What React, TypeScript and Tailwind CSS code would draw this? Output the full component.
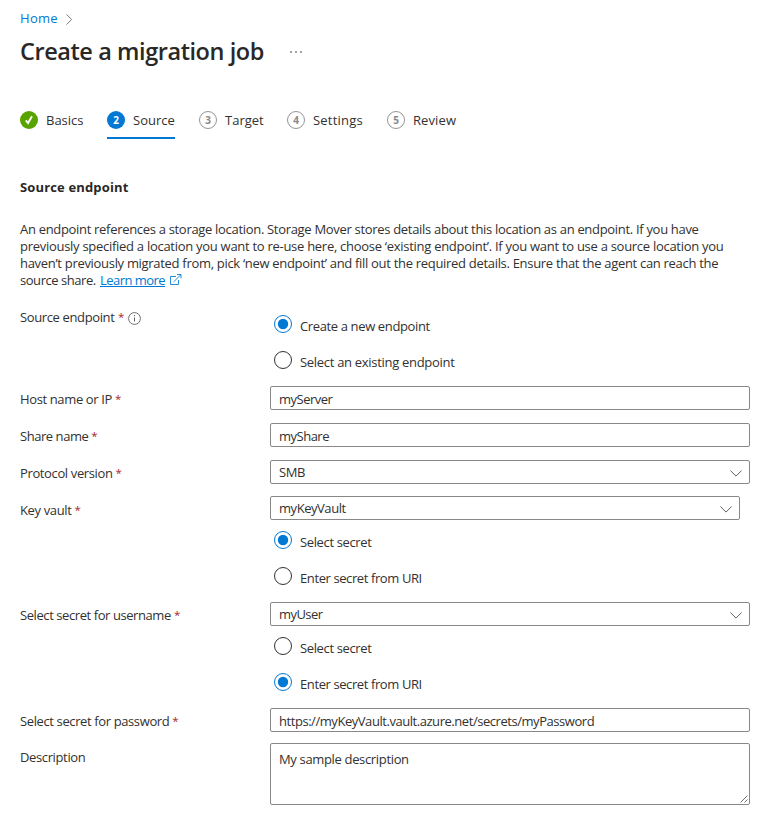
import type { ReactNode } from "react";

function Star() {
  return <span className="relative -top-[1.5px] ml-[3px] text-[11.5px] tracking-normal text-[#a4262c]">*</span>;
}

function Label({ text, required, className = "", textClass = "" }: { text: string; required?: boolean; className?: string; textClass?: string }) {
  return (
    <div className={`w-[250px] shrink-0 whitespace-nowrap ${className}`}>
      <span className={textClass}>{text}</span>
      {required && <Star />}
    </div>
  );
}

function Radio({ text, checked, className = "" }: { text: string; checked?: boolean; className?: string }) {
  return (
    <div className="flex h-[18px] items-start pl-1 whitespace-nowrap">
      <svg width="18" height="18" viewBox="0 0 18 18" className="shrink-0">
        <circle cx="9" cy="9" r="8.5" fill="white" stroke={checked ? "#0078d4" : "#323130"} />
        {checked && <circle cx="9" cy="9" r="5.2" fill="#0078d4" />}
      </svg>
      <span className={`mt-[3px] ml-2 ${className}`}>{text}</span>
    </div>
  );
}

function Field({ text, select, className = "", textClass = "" }: { text: string; select?: boolean; className?: string; textClass?: string }) {
  return (
    <div className={`flex h-6 items-start justify-between rounded-[2px] border border-[#8a8886] pr-[7px] pl-2 ${className}`}>
      <span className={select ? "mt-[3px]" : "mt-1"}>
        <span className={textClass}>{text}</span>
      </span>
      {select && (
        <svg width="12" height="7" viewBox="0 0 12 7" className="mt-[9px]" fill="none" stroke="#605e5c">
          <path d="M.4.5 6 6.1 11.6.5" />
        </svg>
      )}
    </div>
  );
}

function Step({ n, text, state, textClass = "" }: { n: number; text: string; state: "done" | "active" | "todo"; textClass?: string }) {
  const tone =
    state === "done"
      ? "bg-[#57a300] text-white"
      : state === "active"
        ? "bg-[#0078d4] text-white"
        : "border border-[#979593] text-[#8a8886]";
  return (
    <div className={`flex h-7 items-start border-b-2 tracking-normal ${state === "active" ? "border-[#0078d4]" : "border-transparent"}`}>
      <span className={`flex size-[18px] items-center justify-center rounded-full text-[10px] leading-none font-bold ${tone}`}>
        {state === "done" ? (
          <svg width="18" height="18" viewBox="0 0 18 18" fill="none" stroke="white" strokeWidth="1.9">
            <path d="M5.8 9.4 8 12 12 5.2" />
          </svg>
        ) : (
          n
        )}
      </span>
      <span className={`mt-px ml-2 whitespace-nowrap ${textClass}`}>{text}</span>
    </div>
  );
}

function Row({ children, className = "" }: { children: ReactNode; className?: string }) {
  return <div className={`flex items-start ${className}`}>{children}</div>;
}

export default function App() {
  return (
    <main className="h-[831px] w-[775px] overflow-hidden bg-white pl-5 font-['Open_Sans','Noto_Sans',sans-serif] text-[13px] leading-[17px] tracking-[-0.37px] text-[#323130]">
      <nav className="flex h-[27px] pt-[10px] text-[#0078d4]">
        <span className="w-[38px] tracking-[0.3px]">Home</span>
        <svg width="7" height="11" viewBox="0 0 7 11" className="mt-1 ml-2" fill="none" stroke="#797775">
          <path d="M.5.4 5.6 5.5.5 10.6" />
        </svg>
      </nav>
      <header className="mt-2 flex h-8">
        <h1 className="w-[244px] text-[23.5px] leading-8 font-semibold tracking-[-0.43px] whitespace-nowrap text-[#292827]">
          <span>Create a migration job</span>
        </h1>
        <svg width="12" height="2" viewBox="0 0 12 2" className="mt-4 ml-[26px]" fill="#323130">
          <circle cx="1" cy="1" r=".8" />
          <circle cx="6" cy="1" r=".8" />
          <circle cx="11" cy="1" r=".8" />
        </svg>
      </header>

      <div className="mt-11 flex">
        <div className="w-[87px]"><Step n={1} text="Basics" state="done" /></div>
        <div className="w-[92px]"><div className="w-[68px]"><Step n={2} text="Source" state="active" /></div></div>
        <div className="w-[88px]"><Step n={3} text="Target" state="todo" /></div>
        <div className="w-[100px]"><Step n={4} text="Settings" state="todo" textClass="tracking-[0.2px]" /></div>
        <Step n={5} text="Review" state="todo" textClass="tracking-[0.1px]" />
      </div>

      <h2 className="mt-10 font-bold tracking-[0.15px] text-[#292827]"><span>Source endpoint</span></h2>

      <div className="mt-[25px] whitespace-nowrap">
        <div className="tracking-[-0.31px]"><span>An endpoint references a storage location. Storage Mover stores details about this location as an endpoint. If you have</span></div>
        <div className="tracking-[-0.28px]"><span>previously specified a location you want to re-use here, choose ‘existing endpoint’. If you want to use a source location you</span></div>
        <div className="tracking-[-0.305px]"><span>haven’t previously migrated from, pick ‘new endpoint’ and fill out the required details. Ensure that the agent can reach the</span></div>
        <div className="flex">
          <span className="w-20 tracking-[-0.45px]">source share.</span>
          <a className="w-[65px] tracking-[-0.55px] text-[#0078d4] underline">Learn more</a>
          <svg width="12" height="12" viewBox="0 0 12 12" className="mt-[2px] ml-[5px]" fill="none" stroke="#0078d4">
            <path d="M6 2.5H.5v8h8V6M3.6 7.9 11 .5M7 .5h4v4" strokeWidth=".85" />
          </svg>
        </div>
      </div>

      <Row className="mt-[26px]">
        <div className="flex w-[250px] shrink-0 -translate-y-[6px]">
          <span className="w-[95px]">Source endpoint</span>
          <Star />
          <svg width="13" height="13" viewBox="0 0 13 13" className="mt-[3px] ml-1" fill="none" stroke="#605e5c">
            <circle cx="6.5" cy="6.5" r="5.9" strokeWidth=".9" />
            <path d="M6.5 5.5v4M6.5 3v1.2" />
          </svg>
        </div>
        <div className="flex flex-col gap-[18px]">
          <Radio text="Create a new endpoint" checked />
          <Radio text="Select an existing endpoint" className="tracking-[-0.3px]" />
        </div>
      </Row>

      <Row className="mt-[17px]">
        <Label text="Host name or IP" required className="pt-[5px]" />
        <Field text="myServer" className="w-[480px]" textClass="tracking-[-0.5px]" />
      </Row>
      <Row className="mt-[13px]">
        <Label text="Share name" required className="pt-[5px]" textClass="tracking-[-0.45px]" />
        <Field text="myShare" className="w-[480px]" textClass="tracking-[-0.5px]" />
      </Row>
      <Row className="mt-[13px]">
        <Label text="Protocol version" required className="pt-[5px]" />
        <Field text="SMB" select className="w-[480px]" />
      </Row>
      <Row className="mt-3">
        <Label text="Key vault" required className="pt-[6px]" />
        <div>
          <Field text="myKeyVault" select className="w-[470px]" textClass="tracking-[-0.45px]" />
          <div className="mt-[11px] flex flex-col gap-[18px]">
            <Radio text="Select secret" checked />
            <Radio text="Enter secret from URI" className="tracking-[-0.4px]" />
          </div>
        </div>
      </Row>
      <Row className="mt-[17px]">
        <Label text="Select secret for username" required className="pt-[5px]" textClass="tracking-[-0.42px]" />
        <div>
          <Field text="myUser" select className="w-[480px]" textClass="tracking-[-0.55px]" />
          <div className="mt-[11px] flex flex-col gap-[18px]">
            <Radio text="Select secret" />
            <Radio text="Enter secret from URI" checked className="tracking-[-0.4px]" />
          </div>
        </div>
      </Row>
      <Row className="mt-[17px]">
        <Label text="Select secret for password" required className="pt-[5px]" textClass="tracking-[-0.38px]" />
        <Field text="https://myKeyVault.vault.azure.net/secrets/myPassword" className="w-[480px]" textClass="tracking-[-0.45px]" />
      </Row>
      <Row className="mt-[11px]">
        <Label text="Description" className="pt-[6px]" />
        <div className="flex h-[62px] w-[480px] justify-between rounded-[2px] border border-[#8a8886] pt-[7px] pr-px pb-px pl-2">
          <span className="tracking-[-0.34px]">My sample description</span>
          <svg width="8" height="8" viewBox="0 0 8 8" className="self-end" fill="none" stroke="#605e5c" strokeWidth=".9">
            <path d="M.5 7.5l7-7M4.5 7.5l3-3" />
          </svg>
        </div>
      </Row>
    </main>
  );
}
